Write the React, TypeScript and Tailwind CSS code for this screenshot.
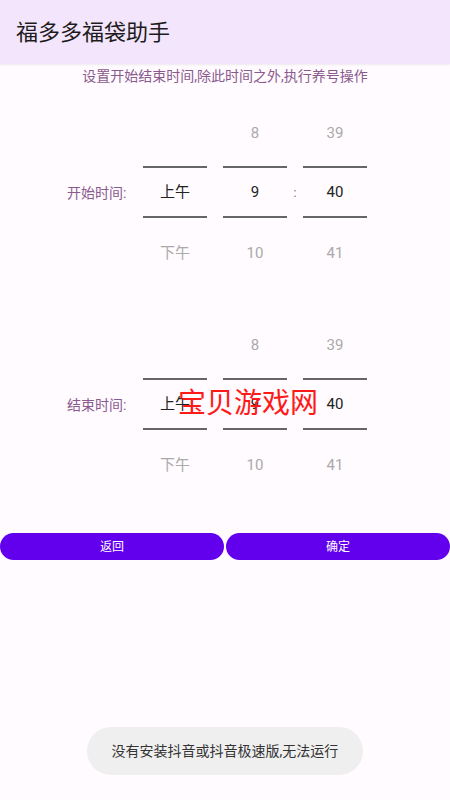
import React from "react";

const FONT = { fontFamily: "Roboto, 'Noto Sans CJK SC', sans-serif" };

function Column({ top, mid, bottom }: { top: string; mid: string; bottom: string }) {
  return (
    <div className="flex w-[64px] flex-col">
      <div className="flex h-[50px] items-center justify-center text-[15px] text-[#aaaaaa]">{top}</div>
      <div className="h-[8px]" />
      <div className="h-[2px] bg-[#666666]" />
      <div className="flex h-[48px] items-center justify-center text-[15px] text-[#222222]">{mid}</div>
      <div className="h-[2px] bg-[#666666]" />
      <div className="h-[10px]" />
      <div className="flex h-[50px] items-center justify-center text-[15px] text-[#aaaaaa]">{bottom}</div>
    </div>
  );
}

function Picker({ label }: { label: string }) {
  return (
    <div className="flex items-center">
      <div className="w-[143px] pl-[67px] text-[14px] text-[#8a5a8e]">{label}</div>
      <Column top="" mid="上午" bottom="下午" />
      <div className="w-[16px]" />
      <Column top="8" mid="9" bottom="10" />
      <div className="flex w-[16px] justify-center text-[12px] text-[#8a5a8e]">:</div>
      <Column top="39" mid="40" bottom="41" />
    </div>
  );
}

export default function App() {
  return (
    <div className="relative h-[800px] w-[450px] overflow-hidden bg-[#fffbfe]" style={FONT}>
      <div className="flex h-[64px] items-center bg-[#f3e5fb] pl-[16px] shadow-[0_1px_2px_rgba(0,0,0,0.08)]">
        <span className="text-[22px] text-[#1d1b20]">福多多福袋助手</span>
      </div>
      <div className="mt-[2px] text-center text-[14px] leading-[20px] text-[#8a5a8e]">
        设置开始结束时间,除此时间之外,执行养号操作
      </div>
      <div className="mt-[22px]">
        <Picker label="开始时间:" />
      </div>
      <div className="relative mt-[42px]">
        <Picker label="结束时间:" />
        <div className="pointer-events-none absolute left-[178px] top-[68px] text-[28px] leading-[32px] text-[#ff1a1a]">
          宝贝游戏网
        </div>
      </div>
      <div className="mt-[43px] flex gap-[2px]">
        <button className="flex h-[27px] flex-1 items-center justify-center rounded-full bg-[#6200ee] text-[12px] text-white">
          返回
        </button>
        <button className="flex h-[27px] flex-1 items-center justify-center rounded-full bg-[#6200ee] text-[12px] text-white">
          确定
        </button>
      </div>
      <div className="absolute left-[87px] top-[727px] flex h-[48px] w-[276px] items-center justify-center rounded-full bg-[#efefef] text-[14px] text-[#333333]">
        没有安装抖音或抖音极速版,无法运行
      </div>
    </div>
  );
}
